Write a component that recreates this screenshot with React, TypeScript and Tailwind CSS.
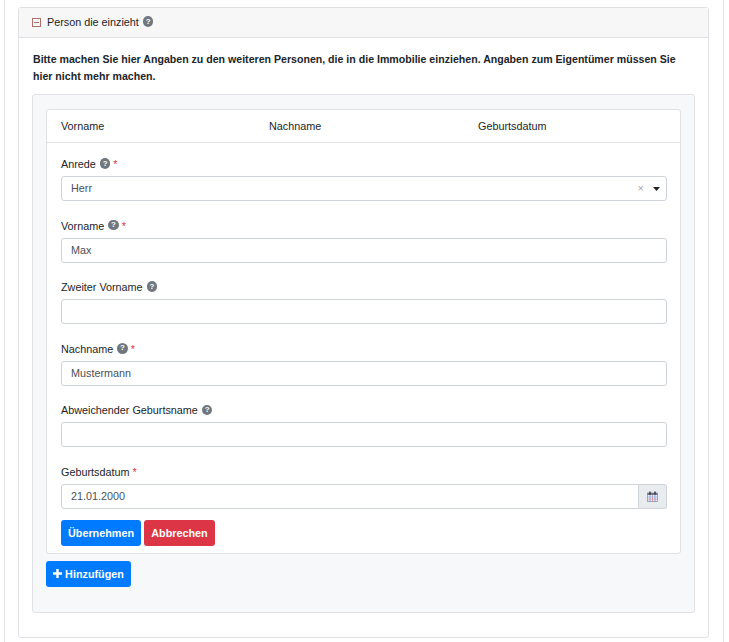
import React from "react";

const font = { fontFamily: '"Liberation Sans", Arial, sans-serif' };

function Help() {
  return (
    <span className="inline-flex items-center justify-center w-[10.5px] h-[10.5px] rounded-full bg-[#70777e] text-white text-[8px] font-bold leading-none ml-[4px] align-middle relative top-[-1px]">
      ?
    </span>
  );
}

function Req() {
  return <span className="text-[#dc3545] ml-[3px]">*</span>;
}

function Label({ text, help, req }: { text: string; help?: boolean; req?: boolean }) {
  return (
    <div className="h-[17px] leading-[17px] text-[10.8px] text-[#212529] mb-[3px] flex items-center">
      <span>{text}</span>
      {help && <Help />}
      {req && <Req />}
    </div>
  );
}

function Input({ value }: { value?: string }) {
  return (
    <div className="h-[25px] border border-[#ced4da] rounded-[3px] bg-white px-[9px] flex items-center text-[10.8px] text-[#495057]">
      {value}
    </div>
  );
}

function Calendar() {
  return (
    <svg width="11" height="11" viewBox="0 0 11 11">
      <rect x="0.5" y="2" width="10" height="8.5" fill="#e7eefc" stroke="#8a95a8" strokeWidth="0.8" />
      <rect x="0.5" y="2" width="10" height="2" fill="#6b7a90" />
      <rect x="2.3" y="0.5" width="1.4" height="3" fill="#333" />
      <rect x="7.3" y="0.5" width="1.4" height="3" fill="#333" />
      <line x1="3" y1="4" x2="3" y2="10.5" stroke="#5b8be0" strokeWidth="0.7" />
      <line x1="5.5" y1="4" x2="5.5" y2="10.5" stroke="#e07a7a" strokeWidth="0.7" />
      <line x1="8" y1="4" x2="8" y2="10.5" stroke="#5b8be0" strokeWidth="0.7" />
      <line x1="0.5" y1="6" x2="10.5" y2="6" stroke="#8fb0e8" strokeWidth="0.7" />
      <line x1="0.5" y1="8.2" x2="10.5" y2="8.2" stroke="#e09a9a" strokeWidth="0.7" />
    </svg>
  );
}

export default function App() {
  return (
    <div className="w-[729px] h-[642px] bg-white overflow-hidden" style={font}>
      <div className="ml-[4px] w-[720px] h-[642px] border-x border-[#e3e5e8] pt-[7px]">
        <div className="ml-[13px] w-[691px] border border-[#dfe1e4] rounded-[3px] bg-white">
          <div className="h-[30px] bg-[#f7f7f7] border-b border-[#dfe1e4] flex items-center pl-[13px] text-[10.8px] text-[#212529]">
            <span className="w-[9px] h-[9px] border border-[#b0706c] flex items-center justify-center mr-[6px]">
              <span className="w-[5px] h-[1px] bg-[#b0706c]" />
            </span>
            <span>Person die einzieht</span>
            <Help />
          </div>
          <div className="px-[13px] pt-[13px] pb-[24px]">
            <p className="text-[10.6px] font-bold leading-[17px] text-[#212529] pl-[1px]">
              Bitte machen Sie hier Angaben zu den weiteren Personen, die in die Immobilie einziehen. Angaben zum Eigentümer müssen Sie hier nicht mehr machen.
            </p>
            <div className="mt-[9px] border border-[#dfe1e4] rounded-[3px] bg-[#f7f8f9] px-[13px] pt-[14px] pb-[25px]">
              <div className="border border-[#dfe1e4] rounded-[3px] bg-white">
                <div className="h-[33px] border-b border-[#dfe1e4] flex items-center pl-[14px] text-[10.8px] text-[#212529]">
                  <span className="w-[208px]">Vorname</span>
                  <span className="w-[209px]">Nachname</span>
                  <span>Geburtsdatum</span>
                </div>
                <div className="pl-[14px] pr-[13px] pt-[13px] pb-[7px]">
                  <Label text="Anrede" help req />
                  <div className="h-[25px] border border-[#ced4da] rounded-[3px] bg-white pl-[9px] pr-[6px] flex items-center text-[10.8px] text-[#495057]">
                    <span className="flex-1">Herr</span>
                    <span className="text-[#aaa] text-[11px] mr-[9px]">×</span>
                    <svg width="7" height="4" viewBox="0 0 7 4">
                      <path d="M0 0 L7 0 L3.5 4 Z" fill="#222" />
                    </svg>
                  </div>
                  <div className="h-[16.6px]" />
                  <Label text="Vorname" help req />
                  <Input value="Max" />
                  <div className="h-[16.6px]" />
                  <Label text="Zweiter Vorname" help />
                  <Input />
                  <div className="h-[16.6px]" />
                  <Label text="Nachname" help req />
                  <Input value="Mustermann" />
                  <div className="h-[16.6px]" />
                  <Label text="Abweichender Geburtsname" help />
                  <Input />
                  <div className="h-[16.6px]" />
                  <Label text="Geburtsdatum" req />
                  <div className="h-[25px] flex">
                    <div className="flex-1 border border-[#ced4da] rounded-l-[3px] bg-white px-[9px] flex items-center text-[10.8px] text-[#495057]">
                      21.01.2000
                    </div>
                    <div className="w-[28px] border border-l-0 border-[#ced4da] rounded-r-[3px] bg-[#e9ecef] flex items-center justify-center">
                      <Calendar />
                    </div>
                  </div>
                  <div className="mt-[11px] flex gap-[3px]">
                    <button className="w-[80px] h-[26px] rounded-[3px] bg-[#007bff] text-white text-[10.8px] font-bold flex items-center justify-center">
                      Übernehmen
                    </button>
                    <button className="w-[71px] h-[26px] rounded-[3px] bg-[#dc3545] text-white text-[10.8px] font-bold flex items-center justify-center">
                      Abbrechen
                    </button>
                  </div>
                </div>
              </div>
              <button className="mt-[7px] w-[85px] h-[26px] rounded-[3px] bg-[#007bff] text-white text-[10.8px] font-bold flex items-center justify-center gap-[3px]">
                <svg width="9" height="9" viewBox="0 0 9 9">
                  <path d="M3.3 0 H5.7 V3.3 H9 V5.7 H5.7 V9 H3.3 V5.7 H0 V3.3 H3.3 Z" fill="#fff" />
                </svg>
                <span>Hinzufügen</span>
              </button>
            </div>
          </div>
        </div>
      </div>
    </div>
  );
}
